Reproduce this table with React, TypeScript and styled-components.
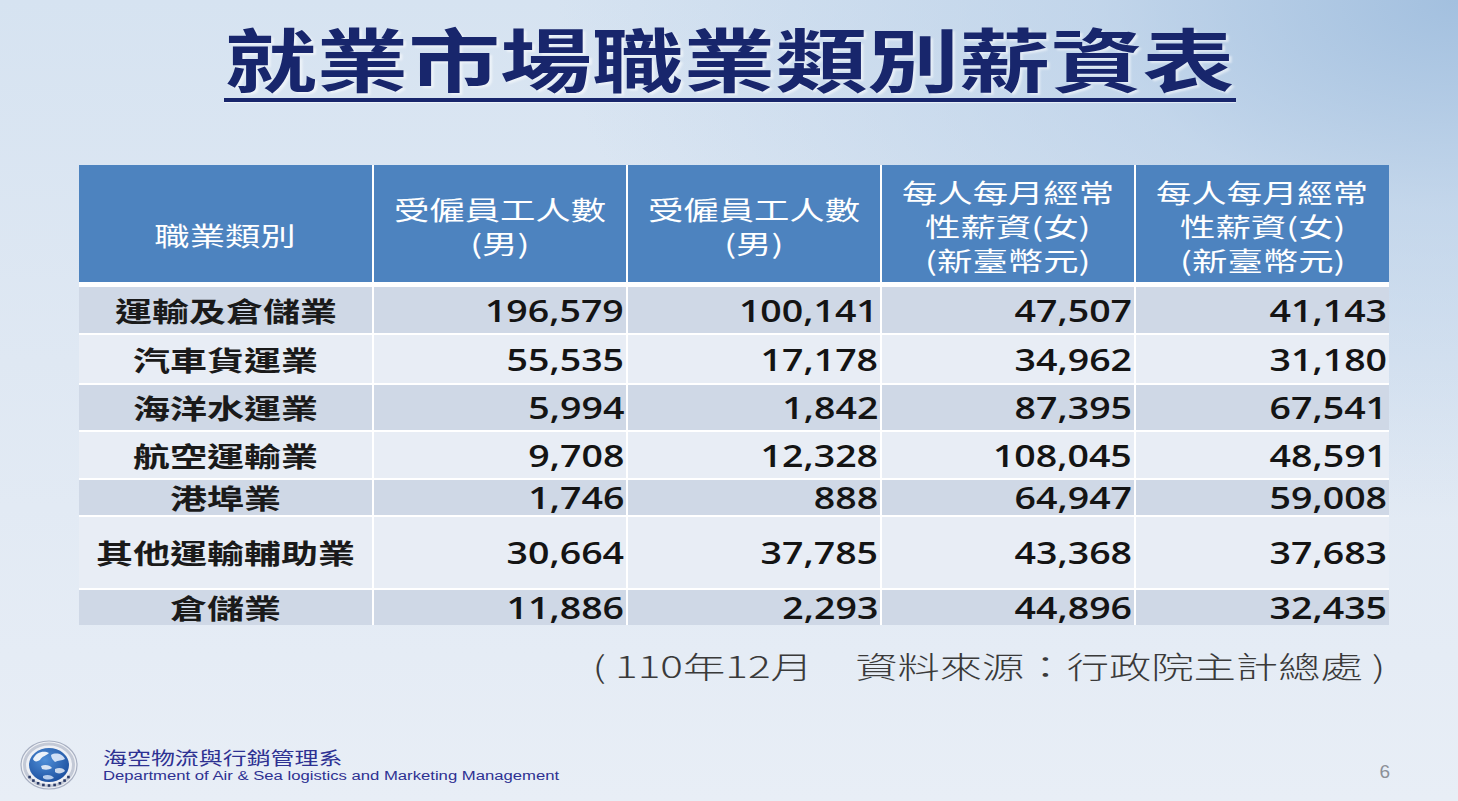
import React from "react";
import styled, { createGlobalStyle } from "styled-components";

const GlobalStyle = createGlobalStyle`
  html, body { margin: 0; padding: 0; }
  body {
    font-family: "Noto Sans CJK TC", "Noto Sans", sans-serif;
    background: #dfe8f3;
  }
`;

const Slide = styled.div`
  width: 1458px;
  height: 801px;
  display: flex;
  flex-direction: column;
  overflow: hidden;
  background:
    radial-gradient(ellipse 900px 520px at 100% 0%, rgba(160, 190, 222, 0.95) 0%, rgba(180, 204, 230, 0.6) 40%, rgba(220, 230, 242, 0) 100%),
    linear-gradient(180deg, #d6e3f1 0%, #dfe8f3 45%, #e8eef6 100%);
`;

const Stretch = styled.span<{ $x: number; $origin?: string }>`
  display: inline-block;
  transform: scaleX(${(p) => p.$x});
  transform-origin: ${(p) => p.$origin ?? "center"} center;
  white-space: pre;
`;

const TitleBlock = styled.header`
  display: flex;
  flex-direction: column;
  align-items: center;
  padding-top: 20px;
`;

const Title = styled.h1`
  margin: 0;
  font-family: "Noto Sans CJK TC", sans-serif;
  font-weight: 700;
  font-size: 69px;
  line-height: 74px;
  color: #18266c;
  text-shadow: 2px 2px 2px rgba(255, 255, 255, 0.55);
`;

const Underline = styled.div`
  width: 1012px;
  height: 4px;
  margin-top: 4px;
  margin-left: 2px;
  background: #18266c;
  box-shadow: 0 1px 1px rgba(255, 255, 255, 0.6);
`;

const Table = styled.div`
  margin: 63px 0 0 79px;
  width: 1310px;
  display: grid;
  grid-template-columns: 293px 252px 252px 252px 253px;
  grid-template-rows: 120px 46px 48px 45px 46px 35px 71px 35px;
  column-gap: 2px;
  row-gap: 2px;
  background: #ffffff;
`;

const HeadCell = styled.div<{ $lower?: boolean }>`
  background: #4d83bf;
  color: #ffffff;
  display: flex;
  flex-direction: column;
  align-items: center;
  justify-content: center;
  padding-top: ${(p) => (p.$lower ? "22px" : "4px")};
  margin-bottom: 3px;
  font-size: 26px;
  font-weight: 400;
  line-height: 34px;
`;

const NameCell = styled.div<{ $dark: boolean }>`
  background: ${(p) => (p.$dark ? "#cfd8e6" : "#e8edf5")};
  display: flex;
  align-items: center;
  justify-content: center;
  color: #1a1a1a;
  font-size: 27px;
  font-weight: 700;
  line-height: 1;
`;

const NumCell = styled.div<{ $dark: boolean }>`
  background: ${(p) => (p.$dark ? "#cfd8e6" : "#e8edf5")};
  display: flex;
  align-items: center;
  justify-content: flex-end;
  padding-right: 2px;
  color: #141414;
  font-family: "Open Sans", "Noto Sans", sans-serif;
  font-size: 31px;
  font-weight: 600;
  line-height: 1;
`;

const Source = styled.p`
  margin: 18px 0 0 0;
  width: 1385px;
  text-align: right;
  font-size: 30px;
  line-height: 44px;
  font-weight: 300;
  color: #3a3a3a;
`;

const Footer = styled.footer`
  margin-top: auto;
  height: 60px;
  display: flex;
  align-items: center;
  padding: 0 68px 6px 19px;
`;

const Logo = styled.svg`
  width: 60px;
  height: 52px;
  flex: none;
`;

const Dept = styled.div`
  margin-left: 24px;
  display: flex;
  flex-direction: column;
  color: #2e3192;
`;

const DeptZh = styled.div`
  font-size: 18px;
  line-height: 22px;
  font-weight: 400;
`;

const DeptEn = styled.div`
  font-family: "Liberation Sans", Arial, sans-serif;
  font-size: 12px;
  line-height: 16px;
`;

const PageNo = styled.div`
  margin-left: auto;
  margin-top: 14px;
  font-family: "Liberation Sans", Arial, sans-serif;
  font-size: 19px;
  color: #8c9098;
`;

const headers: { lines: string[]; lower?: boolean }[] = [
  { lines: ["職業類別"], lower: true },
  { lines: ["受僱員工人數", "(男)"] },
  { lines: ["受僱員工人數", "(男)"] },
  { lines: ["每人每月經常", "性薪資(女)", "(新臺幣元)"] },
  { lines: ["每人每月經常", "性薪資(女)", "(新臺幣元)"] },
];

const rows: [string, string, string, string, string][] = [
  ["運輸及倉儲業", "196,579", "100,141", "47,507", "41,143"],
  ["汽車貨運業", "55,535", "17,178", "34,962", "31,180"],
  ["海洋水運業", "5,994", "1,842", "87,395", "67,541"],
  ["航空運輸業", "9,708", "12,328", "108,045", "48,591"],
  ["港埠業", "1,746", "888", "64,947", "59,008"],
  ["其他運輸輔助業", "30,664", "37,785", "43,368", "37,683"],
  ["倉儲業", "11,886", "2,293", "44,896", "32,435"],
];

function SchoolLogo() {
  const dots = Array.from({ length: 9 }, (_, i) => {
    const a = Math.PI * (0.2 + (0.6 * i) / 8);
    return { x: 30 + Math.cos(a) * 24, y: 26 + Math.sin(a) * 20.5 };
  });
  return (
    <Logo viewBox="0 0 60 52">
      <defs>
        <radialGradient id="lg" cx="40%" cy="35%" r="70%">
          <stop offset="0%" stopColor="#4f8fd8" />
          <stop offset="100%" stopColor="#1c4f9e" />
        </radialGradient>
      </defs>
      <ellipse cx="30" cy="26" rx="28" ry="24" fill="#eef0f5" stroke="#a8b0c2" strokeWidth="1.2" />
      <ellipse cx="30" cy="26" rx="24.5" ry="21" fill="none" stroke="#c3c9d6" strokeWidth="3" />
      <ellipse cx="30" cy="26" rx="20" ry="17" fill="url(#lg)" />
      <path d="M14 20 C17 13 25 11 30 14 C27 17 23 17 21 21 C18 23 15 23 14 20 Z" fill="#ffffff" opacity="0.9" />
      <path d="M32 16 C37 13 44 15 46 20 C43 22 39 21 36 23 C34 21 32 19 32 16 Z" fill="#eaf2ff" opacity="0.85" />
      <path d="M22 27 C26 25 31 26 33 29 C30 31 26 31 23 30 Z" fill="#ffffff" opacity="0.8" />
      <path d="M36 30 C40 28 45 29 46 32 C43 35 38 35 36 33 Z" fill="#ffffff" opacity="0.75" />
      <path d="M24 37 C28 35 33 36 35 39 C31 41 27 41 24 39 Z" fill="#dbe8fb" opacity="0.8" />
      {dots.map((d, i) => (
        <rect key={i} x={d.x - 1.3} y={d.y - 1.3} width="2.6" height="2.6" fill="#2a3a66" />
      ))}
    </Logo>
  );
}

export default function App() {
  return (
    <>
      <GlobalStyle />
      <Slide>
        <TitleBlock>
          <Title>
            <Stretch $x={1.33}>就業市場職業類別薪資表</Stretch>
          </Title>
          <Underline />
        </TitleBlock>

        <Table>
          {headers.map((h, i) => (
            <HeadCell key={`h${i}`} $lower={h.lower}>
              {h.lines.map((l, j) => (
                <Stretch key={j} $x={1.36}>
                  {l}
                </Stretch>
              ))}
            </HeadCell>
          ))}
          {rows.map((r, ri) => {
            const dark = ri % 2 === 0;
            return (
              <React.Fragment key={r[0]}>
                <NameCell $dark={dark}>
                  <Stretch $x={1.37}>{r[0]}</Stretch>
                </NameCell>
                {r.slice(1).map((v, ci) => (
                  <NumCell key={ci} $dark={dark}>
                    <Stretch $x={1.21} $origin="right">
                      {v}
                    </Stretch>
                  </NumCell>
                ))}
              </React.Fragment>
            );
          })}
        </Table>

        <Source>
          <Stretch $x={1.41} $origin="right">{"( 110年12月　資料來源：行政院主計總處 )"}</Stretch>
        </Source>

        <Footer>
          <SchoolLogo />
          <Dept>
            <DeptZh>
              <Stretch $x={1.33} $origin="left">海空物流與行銷管理系</Stretch>
            </DeptZh>
            <DeptEn>
              <Stretch $x={1.39} $origin="left">Department of Air &amp; Sea logistics and Marketing Management</Stretch>
            </DeptEn>
          </Dept>
          <PageNo>6</PageNo>
        </Footer>
      </Slide>
    </>
  );
}
